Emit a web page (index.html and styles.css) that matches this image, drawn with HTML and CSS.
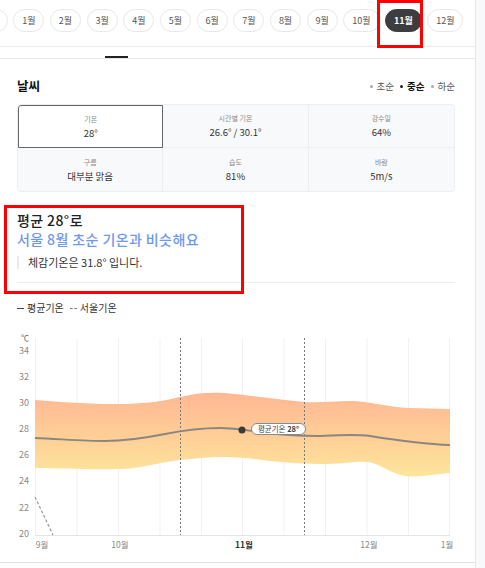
FILE: index.html
```html
<!doctype html>
<html>
<head>
<meta charset="utf-8">
<title>날씨</title>
<link rel="stylesheet" href="styles.css">
</head>
<body>
<div class="page">
	<ul class="months">
		<li>12월</li>
		<li>1월</li>
		<li>2월</li>
		<li>3월</li>
		<li>4월</li>
		<li>5월</li>
		<li>6월</li>
		<li>7월</li>
		<li>8월</li>
		<li>9월</li>
		<li>10월</li>
		<li class="on">11월</li>
		<li>12월</li>
	</ul>
	<div class="tabs"><span class="tab-bar"></span></div>

	<div class="weather">
		<div class="head">
			<h2>날씨</h2>
			<ul class="period">
				<li>초순</li>
				<li class="on">중순</li>
				<li>하순</li>
			</ul>
		</div>
		<div class="stats">
			<div class="cell on"><span class="label">기온</span><span class="value">28°</span></div>
			<div class="cell"><span class="label">시간별 기온</span><span class="value">26.6° / 30.1°</span></div>
			<div class="cell"><span class="label">강수일</span><span class="value">64%</span></div>
			<div class="cell"><span class="label">구름</span><span class="value">대부분 맑음</span></div>
			<div class="cell"><span class="label">습도</span><span class="value">81%</span></div>
			<div class="cell"><span class="label">바람</span><span class="value">5m/s</span></div>
		</div>

		<div class="summary">
			<p class="avg">평균 28°로</p>
			<p class="compare">서울 8월 초순 기온과 비슷해요</p>
			<p class="feel">체감기온은 31.8° 입니다.</p>
		</div>

		<div class="legend">
			<span class="key"><i class="solid"></i>평균기온</span>
			<span class="key"><i class="dash"></i>서울기온</span>
		</div>
	</div>

	<div class="chart">
		<svg width="475" height="232" viewBox="0 330 475 232">
			<defs>
				<linearGradient id="band" x1="0" y1="392" x2="0" y2="477" gradientUnits="userSpaceOnUse">
					<stop offset="0" stop-color="#ffb793"/>
					<stop offset="0.5" stop-color="#ffcd96"/>
					<stop offset="1" stop-color="#fde69c"/>
				</linearGradient>
			</defs>
			<text class="unit" x="21" y="341">℃</text>
			<g class="ylab">
				<text x="29" y="354">34</text>
				<text x="29" y="380">32</text>
				<text x="29" y="406">30</text>
				<text x="29" y="432">28</text>
				<text x="29" y="458">26</text>
				<text x="29" y="484">24</text>
				<text x="29" y="511">22</text>
				<text x="29" y="537">20</text>
			</g>
			<g class="grid">
				<line x1="35.5" y1="338" x2="35.5" y2="535"/>
				<line x1="77" y1="338" x2="77" y2="535"/>
				<line x1="118.5" y1="338" x2="118.5" y2="535"/>
				<line x1="160" y1="338" x2="160" y2="535"/>
				<line x1="201.5" y1="338" x2="201.5" y2="535"/>
				<line x1="242.5" y1="338" x2="242.5" y2="535"/>
				<line x1="284" y1="338" x2="284" y2="535"/>
				<line x1="325.5" y1="338" x2="325.5" y2="535"/>
				<line x1="367" y1="338" x2="367" y2="535"/>
				<line x1="408.5" y1="338" x2="408.5" y2="535"/>
				<line x1="449.5" y1="338" x2="449.5" y2="535"/>
			</g>
			<path fill="url(#band)" d="M35 400 C60 402 90 404 118 404 C140 404 160 402 180 397 C195 393 210 392 225 393 C245 395 270 398 304 402 C320 403 335 401 350 401 C370 401 385 407 410 408 L450 409 L450 473 C435 474 420 478 405 476 C390 474 380 463 367 462 C355 461 345 464 326 464 C305 464 290 463 270 461 C255 459 240 457 222 457 C205 457 195 459 180 460 C160 462 140 469 118 469 C95 470 60 468 35 468 Z"/>
			<line class="axis" x1="35" y1="535.5" x2="450" y2="535.5"/>
			<line class="mark" x1="180.5" y1="338" x2="180.5" y2="535"/>
			<line class="mark" x1="304.5" y1="338" x2="304.5" y2="535"/>
			<path class="avg-line" d="M35 438 C60 439 85 441 105 441 C130 441 150 437 165 434 C185 430 200 428 220 428 C235 428 245 430 260 432 C280 435 300 436 320 436 C340 435 355 434 370 436 C395 440 420 444 450 445"/>
			<path class="seoul-line" d="M35 497 L53 535"/>
			<circle cx="242" cy="430" r="3.5" fill="#3a3a3a"/>
			<rect class="tip" x="251.5" y="423.5" width="54" height="11" rx="5.5"/>
			<text class="tip-text" x="278.5" y="432">평균기온 <tspan font-weight="bold">28°</tspan></text>
			<g class="xlab">
				<text x="42" y="548">9월</text>
				<text x="120" y="548">10월</text>
				<text x="244" y="548" class="cur">11월</text>
				<text x="369" y="548">12월</text>
				<text x="447" y="548">1월</text>
			</g>
		</svg>
	</div>

	<div class="mark-box box-month"></div>
	<div class="mark-box box-summary"></div>
</div>
</body>
</html>
```

FILE: styles.css
```css
*{ margin: 0; padding: 0; list-style: none; box-sizing: border-box;}
body{ background: #f8f9fb; font-family: "Noto Sans CJK KR", "Noto Sans", sans-serif; color: #222; overflow: hidden;}
.page{ width: 476px; height: 568px; background: #fff; border-right: 1px solid #e6e7ea; position: relative; overflow: hidden;}

.months{ height: 47px; border-bottom: 1px solid #ececec; display: flex; gap: 5.4px; padding-top: 9px; margin-left: -28.5px; white-space: nowrap;}
.months li{ height: 23px; padding: 0 8px; border: 1px solid #e7e7e7; border-radius: 12px; font-size: 9px; line-height: 21px; color: #555; flex: none;}
.months li.on{ background: #3d3d3f; border-color: #3d3d3f; color: #fff; font-weight: bold;}

.tabs{ height: 12px; border-bottom: 1px solid #e6e6e6; display: flex; align-items: flex-end; padding-left: 105px;}
.tab-bar{ width: 23px; height: 2px; background: #222;}

.weather{ padding: 0 20px 0 17px;}
.head{ display: flex; justify-content: space-between; align-items: center; margin-top: 19px; height: 16px;}
.head h2{ font-size: 12.5px; font-weight: bold; line-height: 16px; color: #111;}
.period{ display: flex; gap: 6px; font-size: 9.5px; color: #555; line-height: 12px;}
.period li::before{ content: ""; display: inline-block; width: 3px; height: 3px; border-radius: 50%; background: #aaa; margin-right: 4px; vertical-align: middle; position: relative; top: -1px;}
.period li.on{ color: #111; font-weight: bold;}
.period li.on::before{ background: #222;}

.stats{ margin-top: 10px; display: grid; grid-template-columns: repeat(3, 1fr); border: 1px solid #eceef1; border-radius: 4px; background: #f8f9fb; overflow: hidden;}
.cell{ height: 43px; display: flex; flex-direction: column; align-items: center; justify-content: center; gap: 3px; border-right: 1px solid #eceef1; border-bottom: 1px solid #eceef1;}
.cell:nth-child(3n){ border-right: 0;}
.cell:nth-child(n+4){ border-bottom: 0;}
.cell.on{ background: #fff; border: 1px solid #666; border-radius: 3px 0 0 0;}
.label{ font-size: 7px; line-height: 10px; color: #8a8a8a;}
.value{ font-size: 9.5px; line-height: 13px; color: #333;}

.summary{ margin-top: 19px; padding-bottom: 13px; border-bottom: 1px solid #ededed;}
.avg{ font-size: 14px; line-height: 19px; color: #222; font-weight: 500; letter-spacing: 0.4px;}
.compare{ font-size: 14px; line-height: 18px; color: #6e98ef; font-weight: 500; letter-spacing: 0.4px;}
.feel{ margin-top: 8px; border-left: 2px solid #ebebeb; padding-left: 9px; font-size: 11px; line-height: 13px; color: #333;}

.legend{ margin-top: 19px; display: flex; gap: 6px; font-size: 10px; line-height: 12px; color: #333;}
.key{ display: flex; align-items: center; gap: 3px;}
.key i{ display: block; width: 7px; height: 0;}
.key .solid{ border-top: 1.5px solid #444;}
.key .dash{ border-top: 1.5px dashed #777;}

.chart{ margin-top: 16px; border-bottom: 1px solid #e2e2e2;}
.chart svg{ display: block;}
.chart text{ font-family: "Noto Sans CJK KR", "Noto Sans", sans-serif;}
.unit{ font-size: 8px; fill: #666;}
.ylab text{ font-size: 9px; fill: #8a8a8a; text-anchor: end;}
.grid line{ stroke: #f1f1f1; stroke-width: 1;}
.axis{ stroke: #e4e4e4; stroke-width: 1;}
.mark{ stroke: #777; stroke-width: 1; stroke-dasharray: 2 2;}
.avg-line{ fill: none; stroke: #8b8680; stroke-width: 1.8;}
.seoul-line{ fill: none; stroke: #999; stroke-width: 1.2; stroke-dasharray: 3 2;}
.tip{ fill: #fff; stroke: #8a8a8a; stroke-width: 1;}
.tip-text{ font-size: 7.5px; fill: #444; text-anchor: middle;}
.xlab text{ font-size: 8.5px; fill: #888; text-anchor: middle;}
.xlab .cur{ fill: #333; font-weight: bold;}

.mark-box{ position: absolute; border: 3px solid #f00;}
.box-month{ left: 377px; top: 0; width: 46px; height: 48px;}
.box-summary{ left: 4px; top: 205px; width: 240px; height: 89px;}
```
